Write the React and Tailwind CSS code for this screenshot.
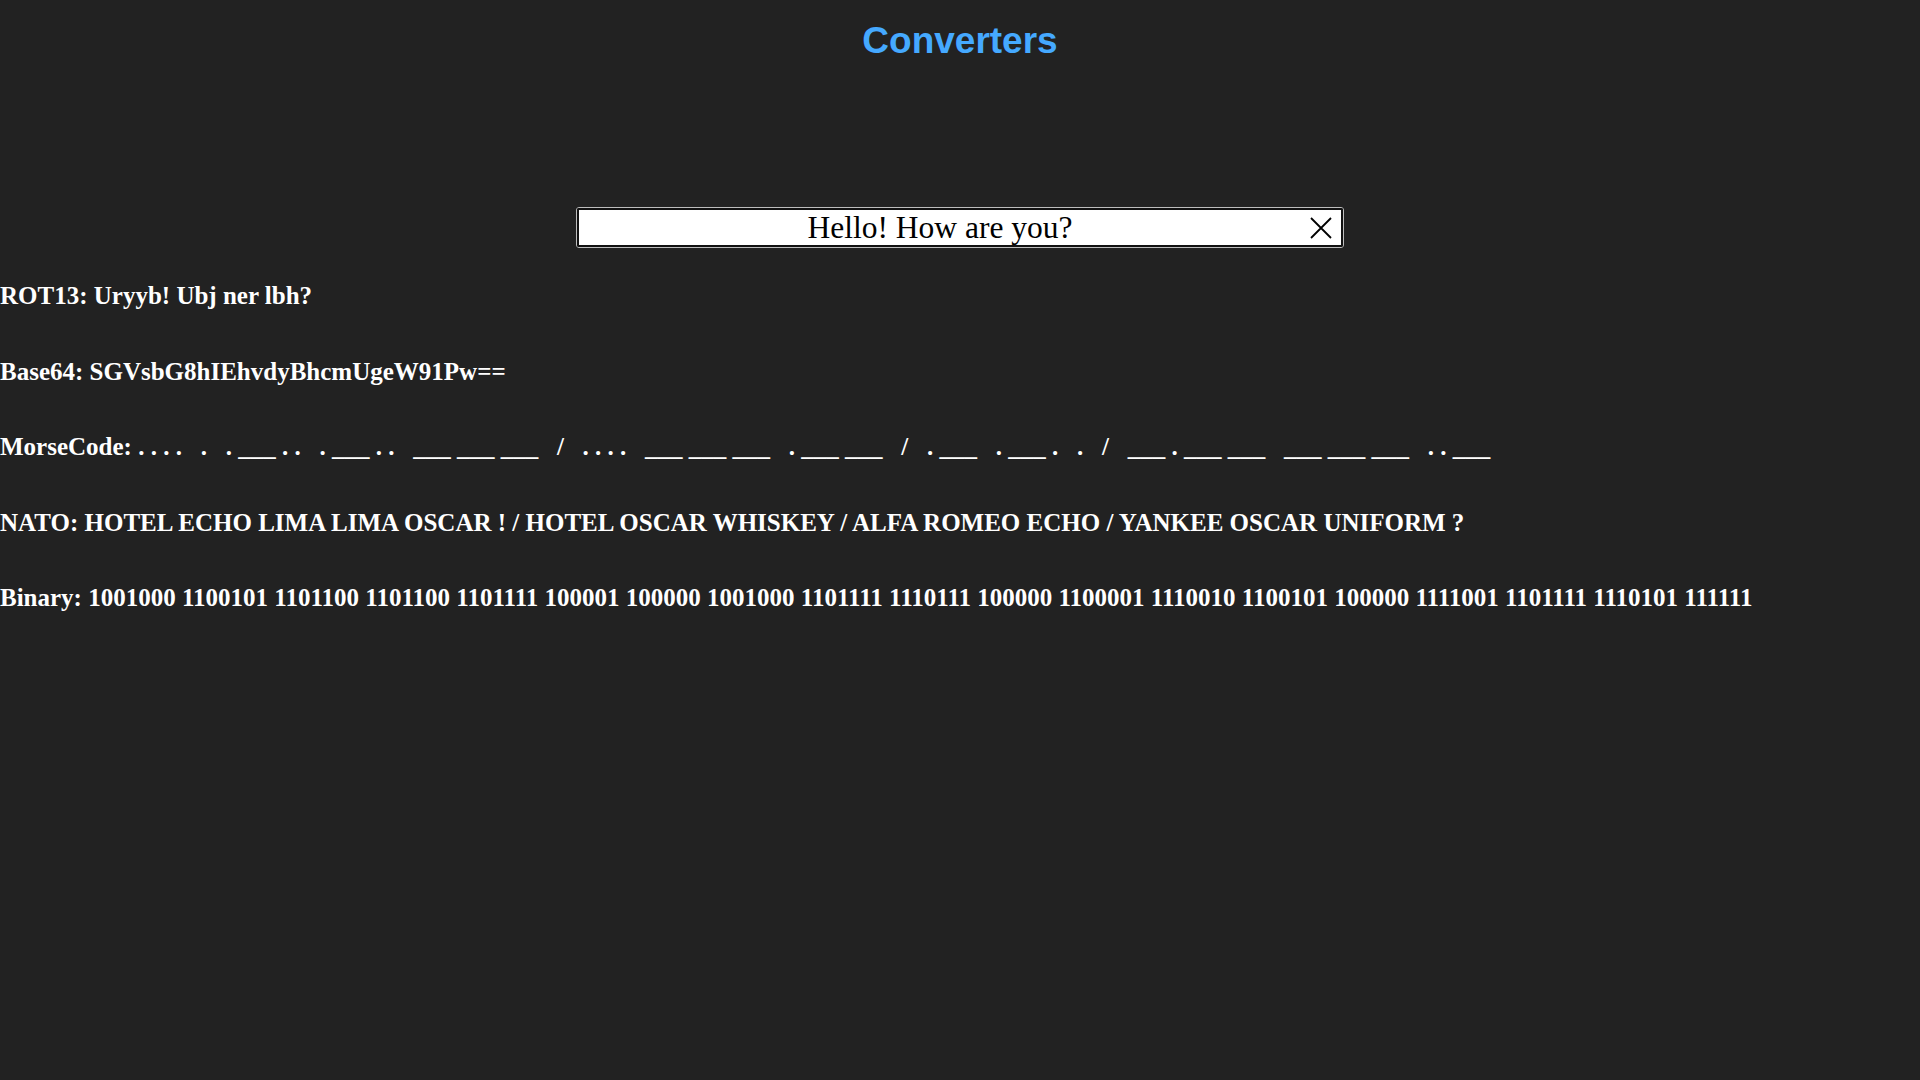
import React, { useState } from "react";

const MORSE = {
  A: ".-", B: "-...", C: "-.-.", D: "-..", E: ".", F: "..-.", G: "--.", H: "....",
  I: "..", J: ".---", K: "-.-", L: ".-..", M: "--", N: "-.", O: "---", P: ".--.",
  Q: "--.-", R: ".-.", S: "...", T: "-", U: "..-", V: "...-", W: ".--", X: "-..-",
  Y: "-.--", Z: "--..",
};

function toMorse(text) {
  return text
    .toUpperCase()
    .split(" ")
    .map((w) =>
      w
        .split("")
        .filter((c) => MORSE[c])
        .map((c) =>
          MORSE[c]
            .split("")
            .map((s) => (s === "." ? "." : "___"))
            .join(" ")
        )
        .join("   ")
    )
    .join("   /   ");
}

export default function App() {
  const [value, setValue] = useState("Hello! How are you?");
  const morse = toMorse(value);
  return (
    <div className="min-h-screen w-full bg-[#222222] text-white">
      <div className="pt-[20px] text-center font-['Liberation_Sans',Arial,sans-serif] text-[37px] font-bold leading-[42px] text-[#45a9ff]">
        Converters
      </div>

      <div className="mx-auto mt-[145px] h-[41px] w-[768px] rounded-[3px] border border-[#bdbdbd]">
        <div className="flex h-full items-center rounded-[2px] border-2 border-[#111111] bg-white">
          <input
            value={value}
            onChange={(e) => setValue(e.target.value)}
            className="h-full min-w-0 flex-1 bg-transparent pt-[1px] text-center font-['Liberation_Serif','Times_New_Roman',serif] text-[31.5px] text-black outline-none"
          />
          <button className="flex h-full w-[40px] items-center justify-center" onClick={() => setValue("")}>
            <svg width="22" height="22" viewBox="0 0 22 22" className="mr-[1px]">
              <path d="M1 1 L21 21 M21 1 L1 21" stroke="#000" strokeWidth="1.8" fill="none" />
            </svg>
          </button>
        </div>
      </div>

      <div className="mt-[34px] flex flex-col gap-[48px] font-['Liberation_Serif','Times_New_Roman',serif] text-[25px] font-bold leading-[27.5px]">
        <div>ROT13: Uryyb! Ubj ner lbh?</div>
        <div>Base64: SGVsbG8hIEhvdyBhcmUgeW91Pw==</div>
        <div className="whitespace-pre">{"MorseCode: " + morse}</div>
        <div>NATO: HOTEL ECHO LIMA LIMA OSCAR ! / HOTEL OSCAR WHISKEY / ALFA ROMEO ECHO / YANKEE OSCAR UNIFORM ?</div>
        <div>Binary: 1001000 1100101 1101100 1101100 1101111 100001 100000 1001000 1101111 1110111 100000 1100001 1110010 1100101 100000 1111001 1101111 1110101 111111</div>
      </div>
    </div>
  );
}
